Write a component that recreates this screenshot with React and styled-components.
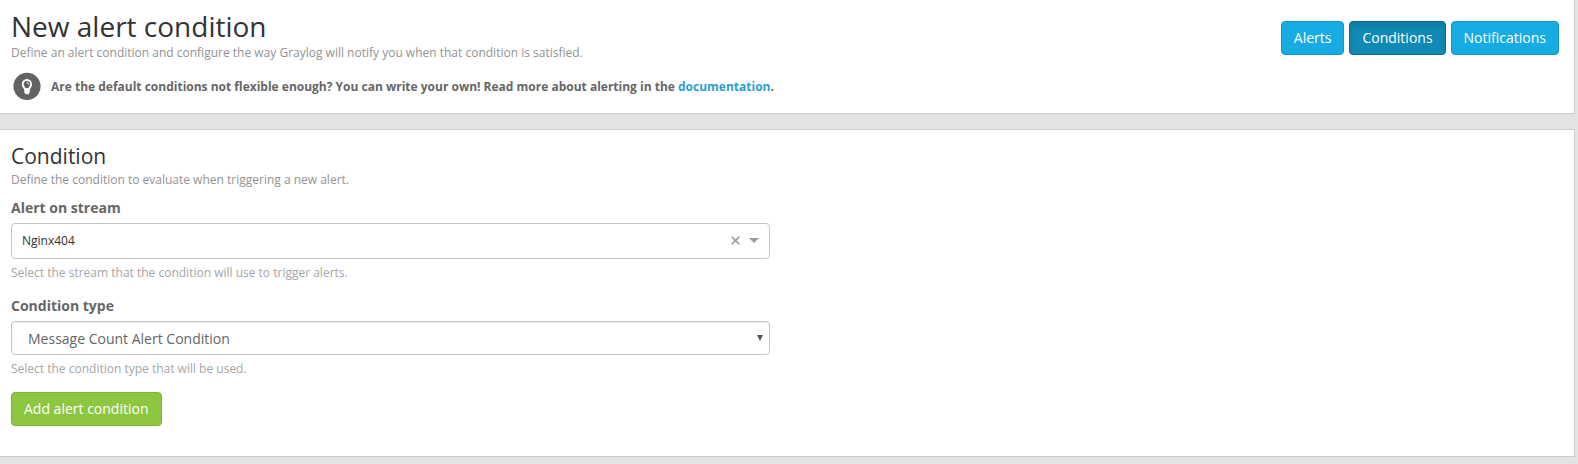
import React from 'react';
import styled, { createGlobalStyle } from 'styled-components';

const GlobalStyle = createGlobalStyle`
  * { box-sizing: border-box; }
  body {
    margin: 0;
    background: #e3e3e3;
    color: #666;
    font: 12px/17px "Open Sans", "Noto Sans", sans-serif;
    overflow: hidden;
  }
`;

const Page = styled.div`
  display: flex;
  flex-direction: column;
  gap: 15px;
  width: 1575px;
`;

const Panel = styled.section`
  height: ${(p) => p.$height}px;
  padding: ${(p) => p.$top}px 15px 0 11px;
  background: #fff;
  border: solid #cacccc;
  border-width: ${(p) => (p.$first ? '0 1px 1px 0' : '1px 1px 1px 0')};
`;

const HeaderRow = styled.div`
  display: flex;
  justify-content: space-between;
`;

const Title = styled.h1`
  margin: 0 0 2px;
  color: #333;
  font-size: 28px;
  font-weight: 400;
  line-height: 31px;
`;

const Subtitle = styled.h2`
  margin: 0 0 3px;
  color: #333;
  font-size: 21px;
  font-weight: 400;
  line-height: 24px;
`;

const Description = styled.p`
  margin: 0;
  color: #939393;
`;

const Support = styled.div`
  display: flex;
  align-items: center;
  gap: 10px;
  margin: 11px 0 0 2px;
  font-weight: 700;
`;

const Link = styled.a`
  color: #2a9fd6;
  text-decoration: none;
`;

const Actions = styled.nav`
  display: flex;
  gap: 5px;
  margin-top: 10px;
`;

const variants = {
  info: 'background: #16ace3; border-color: #1499c9;',
  active:
    'background: #1089b5; border-color: #0c6b8e; box-shadow: inset 0 3px 5px rgba(0, 0, 0, 0.125);',
  success: 'background: #8dc63f; border-color: #7fb536;',
};

const Button = styled.button`
  height: 34px;
  padding: 0 12px;
  border: 1px solid;
  border-radius: 4px;
  color: #fff;
  font: 400 14px/20px "Open Sans", "Noto Sans", sans-serif;
  white-space: nowrap;
  ${(p) => variants[p.$variant]}
`;

const Field = styled.div`
  width: 759px;
  margin-top: ${(p) => p.$gap}px;
`;

const Label = styled.label`
  display: block;
  margin-bottom: 5px;
  font-size: 14px;
  font-weight: 700;
  line-height: 20px;
`;

const SelectBox = styled.div`
  display: flex;
  align-items: center;
  height: 36px;
  padding: 0 10px 1px;
  border: 1px solid #c4c4c4;
  border-radius: 4px;
  color: #333;
`;

const NativeSelectBox = styled(SelectBox)`
  height: 34px;
  padding: 0 6px 0 16px;
  box-shadow: inset 0 1px 1px rgba(0, 0, 0, 0.075);
  color: #666;
  font-size: 14px;
`;

const Value = styled.span`
  flex: 1;
`;

const Indicators = styled.span`
  display: flex;
  align-items: center;
  gap: 9px;
`;

const Help = styled.p`
  margin: 5px 0 0;
  color: #a6a6a6;
`;

const Submit = styled.div`
  margin-top: 15px;
`;

const BulbIcon = () => (
  <svg width="28" height="28" viewBox="0 -0.5 28 28">
    <circle cx="14" cy="13.8" r="13.6" fill="#636363" />
    <path
      d="M12 16.7c-.2-1.500-2.300-2.200-2.300-5A4.200 4.200 0 0 1 18.100 11.700c0 2.800-1.900 3.500-2.100 5z"
      fill="none"
      stroke="#fff"
      strokeWidth="1.900"
    />
    <path d="M13.800 10q1.700.2 1.900 1.800" fill="none" stroke="#fff" strokeWidth="1" />
    <path d="M11.300 15.500h5.400v4.500l-1.200 1.800h-2.600l-1.600-1.800z" fill="#fff" />
  </svg>
);

const ClearIcon = () => (
  <svg width="9" height="9" viewBox="0 0 9 9">
    <path d="M.7.7l7.600 7.600M8.300.7L.7 8.300" stroke="#909090" strokeWidth="1.400" />
  </svg>
);

const CaretIcon = () => (
  <svg width="10" height="5" viewBox="0 0 10 5">
    <path d="M0 0h10L5 5z" fill="#999" />
  </svg>
);

const ArrowIcon = () => (
  <svg width="6" height="6" viewBox="0 0 6 6">
    <path d="M0 0h6L3 6z" fill="#555" />
  </svg>
);

export default function App() {
  return (
    <>
      <GlobalStyle />
      <Page>
        <Panel $first $height={114} $top={11}>
          <HeaderRow>
            <div>
              <Title>New alert condition</Title>
              <Description>
                Define an alert condition and configure the way Graylog will notify you when that
                condition is satisfied.
              </Description>
              <Support>
                <BulbIcon />
                <span>
                  Are the default conditions not flexible enough? You can write your own! Read more
                  about alerting in the <Link>documentation</Link>.
                </span>
              </Support>
            </div>
            <Actions>
              <Button $variant="info">Alerts</Button>
              <Button $variant="active">Conditions</Button>
              <Button $variant="info">Notifications</Button>
            </Actions>
          </HeaderRow>
        </Panel>
        <Panel $height={328} $top={14}>
          <Subtitle>Condition</Subtitle>
          <Description>Define the condition to evaluate when triggering a new alert.</Description>
          <Field $gap={10}>
            <Label>Alert on stream</Label>
            <SelectBox>
              <Value>Nginx404</Value>
              <Indicators>
                <ClearIcon />
                <CaretIcon />
              </Indicators>
            </SelectBox>
            <Help>Select the stream that the condition will use to trigger alerts.</Help>
          </Field>
          <Field $gap={15}>
            <Label>Condition type</Label>
            <NativeSelectBox>
              <Value>Message Count Alert Condition</Value>
              <ArrowIcon />
            </NativeSelectBox>
            <Help>Select the condition type that will be used.</Help>
          </Field>
          <Submit>
            <Button $variant="success">Add alert condition</Button>
          </Submit>
        </Panel>
      </Page>
    </>
  );
}
